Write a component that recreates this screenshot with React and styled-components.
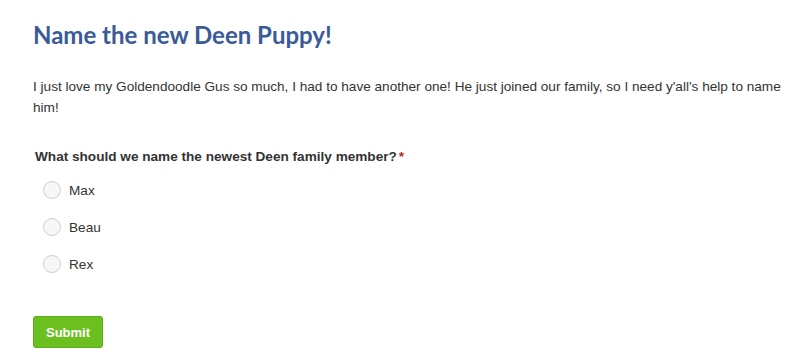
import React, { useState } from 'react'
import styled, { createGlobalStyle } from 'styled-components'

const GlobalStyle = createGlobalStyle`
  body {
    margin: 0;
    background: #fff;
    font-family: "Liberation Sans", Arial, sans-serif;
  }
`

const options = ['Max', 'Beau', 'Rex']

function App() {
  const [choice, setChoice] = useState(null)

  return (
    <>
      <GlobalStyle />
      <Page>
        <Title>Name the new Deen Puppy!</Title>
        <Intro>
          I just love my Goldendoodle Gus so much, I had to have another one! He just joined our family, so I need y'all's help to name him!
        </Intro>
        <Question>
          What should we name the newest Deen family member?<Req>*</Req>
        </Question>
        <Options>
          {options.map((o) => (
            <Option key={o} onClick={() => setChoice(o)}>
              <Radio checked={choice === o} />
              <span>{o}</span>
            </Option>
          ))}
        </Options>
        <SubmitButton>Submit</SubmitButton>
      </Page>
    </>
  )
}

export default App

const Page = styled.div`
  padding: 20px 10px 0 33px;
  display: flex;
  flex-direction: column;
  align-items: flex-start;
`

const Title = styled.h1`
  font-family: Lato, "Open Sans", sans-serif;
  font-weight: 700;
  font-size: 24px;
  line-height: 30px;
  color: #3a5a99;
  margin: 0;
`

const Intro = styled.p`
  font-size: 13.6px;
  line-height: 21px;
  color: #333;
  margin: 26px 0 0;
  max-width: 755px;
`

const Question = styled.div`
  font-size: 13.6px;
  font-weight: 700;
  color: #333;
  line-height: 18px;
  margin: 30px 0 0 2px;
`

const Req = styled.span`
  color: #b52727;
  margin-left: 2px;
`

const Options = styled.div`
  display: flex;
  flex-direction: column;
  gap: 17px;
  margin: 14px 0 0 10px;
`

const Option = styled.label`
  display: flex;
  align-items: center;
  gap: 8px;
  font-size: 13.6px;
  color: #333;
  cursor: pointer;
  height: 20px;
`

const Radio = styled.span`
  width: 18px;
  height: 18px;
  border-radius: 50%;
  border: 1px solid #cfcfcf;
  background: ${(p) => (p.checked ? '#6cbf1f' : '#f7f7f7')};
  box-sizing: border-box;
`

const SubmitButton = styled.button`
  margin-top: 42px;
  width: 70px;
  height: 32px;
  background: #6bbf1e;
  border: 1px solid #5faa18;
  border-radius: 3px;
  color: #fff;
  font-family: "Liberation Sans", Arial, sans-serif;
  font-weight: 700;
  font-size: 13px;
  cursor: pointer;
`
